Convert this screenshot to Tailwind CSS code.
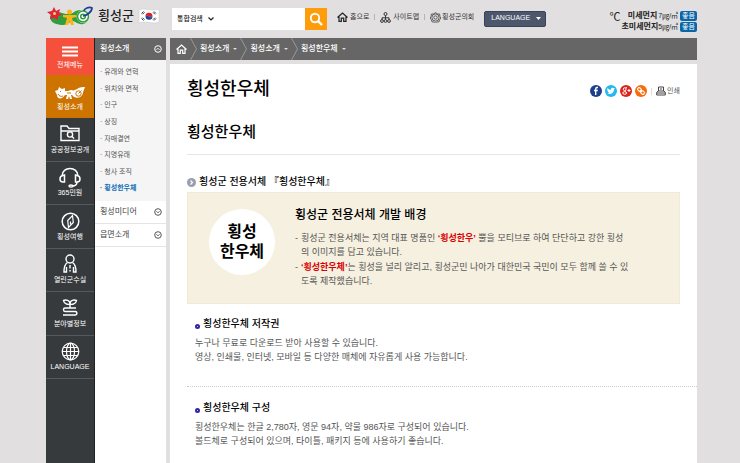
<!DOCTYPE html>
<html lang="ko">
<head>
    <meta charset="UTF-8">
    <meta name="viewport" content="width=device-width, initial-scale=1.0">
    <title>횡성한우체 - 횡성군</title>
    <script src="https://cdn.jsdelivr.net/npm/@tailwindcss/browser@4"></script>
</head>
<body class="min-h-screen flex flex-col bg-[#e1dfe0] pl-[46px] pr-[43px] font-['Liberation_Sans','Noto_Sans_CJK_KR',sans-serif] text-[#222]">
    <!-- top bar -->
    <header class="flex h-[38px] items-center">
        <a href="#" class="flex w-[126px] shrink-0 items-center pb-[6px]">
            <svg class="w-12 h-5 shrink-0" viewBox="0 0 48 20">
                <path d="M4 10c3-4 8-5 12-3 3 1 9 2 12-1 4-3 10-2 13 1 3 4 1 10-4 11-4 1-7-2-10-3-3 0-5 4-10 4S3 17 4 10z" fill="#2f9e3c"/>
                <path d="M8 1l2 4 4-2-1 4 3 2-4 1 0 4-4-2-4 1 1-4-4-3 5-1z" fill="#e0243b"/>
                <circle cx="8.500" cy="7.500" r="1.500" fill="#ffd54a"/>
                <circle cx="23.500" cy="6" r="2.500" fill="#f7b516"/>
                <path d="M17 9h13v2l-4 1 2 7h-3l-1.500-4-1.500 4h-3l2-7-4-1z" fill="#f7b516"/>
                <circle cx="37" cy="10.500" r="6.500" fill="#fff"/>
                <circle cx="37" cy="10.500" r="5.500" fill="none" stroke="#2f9e3c" stroke-width="1.500"/>
                <circle cx="37" cy="10.500" r="2.300" fill="none" stroke="#2f9e3c" stroke-width="1.500"/>
                <path d="M37 10c3 0 9-4 9-8-3-2-8 1-8 3" fill="none" stroke="#1c3f94" stroke-width="1.700"/>
            </svg>
            <span class="ml-1 text-[13px] leading-5 font-medium">횡성군</span>
            <svg class="ml-1 w-[22px] h-[17px]" viewBox="0 0 22 17">
                <path d="M1 2c6-3 12 2 20-1v13c-7 3-13-2-20 1z" fill="#fff" stroke="#ccc" stroke-width=".6"/>
                <path d="M7.500 8.500a3.500 3.500 0 0 1 7-.5c-1.500 2-3 1-3.500.500s-2-1.500-3.500 0z" fill="#d8232f"/>
                <path d="M7.500 8.500a3.500 3.500 0 0 0 7-.5c-1.500 2-3 1-3.500.500s-2-1.500-3.500 0z" fill="#17479e"/>
                <path d="M3.500 5.500l2-2M4.500 6.300l2-2M16 3.500l2 2M15 4.300l2 2M3.500 10.500l2 2M4.500 9.700l2 2M16 12.500l2-2M15 11.700l2-2" stroke="#222" stroke-width=".9"/>
            </svg>
        </a>
        <form class="flex h-[22px] w-[155px] shrink-0 bg-white">
            <div class="relative flex items-center">
                <select aria-label="검색 구분" class="w-[42px] appearance-none bg-transparent pl-[5px] text-[7px] font-medium">
                    <option>통합검색</option>
                </select>
                <svg class="pointer-events-none absolute right-0 w-[6px] h-[4px]" viewBox="0 0 6 4"><path d="M.5.500L3 3 5.500.500" fill="none" stroke="#222" stroke-width="1.200"/></svg>
            </div>
            <input type="text" aria-label="검색어" class="min-w-0 flex-1 px-1 text-[8px] outline-none">
            <button type="submit" aria-label="검색" class="flex w-[22px] items-center justify-center bg-[#ff9c0a]">
                <svg class="w-[14px] h-[14px]" viewBox="0 0 14 14" fill="none" stroke="#fff"><circle cx="6" cy="6" r="4.200" stroke-width="1.900"/><path d="M9 9l4 4" stroke-width="2.400"/></svg>
            </button>
        </form>
        <nav class="ml-[10px] flex shrink-0 items-center pb-1 text-[7px] text-[#333]">
            <a href="#" class="flex items-center gap-0.5">
                <svg class="w-[11px] h-[10px]" viewBox="0 0 11 10" fill="none" stroke="#222" stroke-width="1.200"><path d="M.5 5.500l5-4.500 5 4.500M2 4.800v4.600h2.300V6.200h2.400v3.200H9V4.800"/></svg>
                홈으로
            </a>
            <span class="mx-[5px] h-[6px] w-px bg-[#b5b5b5]"></span>
            <a href="#" class="flex items-center gap-0.5">
                <svg class="w-[11px] h-[11px]" viewBox="0 0 11 11" fill="none" stroke="#333"><circle cx="5.500" cy="2" r="1.500"/><circle cx="2" cy="9" r="1.400"/><circle cx="5.500" cy="9" r="1.400"/><circle cx="9" cy="9" r="1.400"/><path d="M5.500 3.500v4M2 7.500V5.800h7v1.700"/></svg>
                사이트맵
            </a>
            <span class="mx-[5px] h-[6px] w-px bg-[#b5b5b5]"></span>
            <a href="#" class="flex items-center gap-px">
                <svg class="w-[11px] h-[11px]" viewBox="0 0 11 11" fill="none" stroke="#444" stroke-width=".8"><circle cx="5.500" cy="5.500" r="3.600"/><circle cx="5.500" cy="5.500" r="1.700"/><path d="M5.500.4l1.700 1.500 2.400.1.300 2.400.9 1.600-1.200 1.800-.6 2-2.200.2-1.300.9-1.400-.9-2.100-.2-.6-2L.2 6l.9-1.600.3-2.400 2.400-.1z"/></svg>
                횡성군의회
            </a>
        </nav>
        <button type="button" class="mb-px ml-[10px] flex h-4 w-[62px] shrink-0 items-center justify-between rounded-[2px] border border-[#39425a] bg-[#4d576c] pr-1 pl-[6px] text-[7px] text-white">
            LANGUAGE
            <svg class="w-[5px] h-[3px]" viewBox="0 0 5 3"><path d="M0 0h5L2.500 3z" fill="#fff"/></svg>
        </button>
        <div class="ml-auto flex shrink-0 items-start gap-px pt-[5px]">
            <span class="text-[11px] leading-3">℃</span>
            <ul class="flex flex-col items-end gap-px text-[8px] leading-[10px]">
                <li class="flex items-center"><b>미세먼지</b><span class="ml-px text-[7px]">7㎍/㎥</span><span class="ml-0.5 rounded-[2px] bg-[#0b66a8] px-[2px] text-[7px] text-white">좋음</span></li>
                <li class="flex items-center"><b>초미세먼지</b><span class="text-[7px]">5㎍/㎥</span><span class="ml-0.5 rounded-[2px] bg-[#0b66a8] px-[2px] text-[7px] text-white">좋음</span></li>
            </ul>
        </div>
    </header>

    <div class="flex flex-1">
        <!-- main menu -->
        <nav class="flex w-[49px] shrink-0 flex-col border-r border-[#222] bg-[#363a3d] text-[7px] leading-[10px] text-white">
            <a href="#" class="flex h-[37px] flex-col items-center justify-end gap-[3px] bg-[#f4503c] pb-[5px]">
                <svg class="w-4 h-[11px]" viewBox="0 0 16 11" stroke="#fff" stroke-width="1.800"><path d="M0 1.500h16M0 5.500h16M0 9.500h16"/></svg>
                전체메뉴
            </a>
            <a href="#" class="flex h-[43px] flex-col items-center justify-end gap-[2px] bg-[#cd7300] pb-[6px]">
                <svg class="w-8 h-[14px]" viewBox="0 0 32 14">
                    <path d="M1 5l3-1 1-3 3 2 3-1v3c2 0 4 0 6-1 3 1 4 0 6-1 3-2 6-2 8-2-1 3-2 4-2 6-1 4-5 6-9 4l-2-2-1 0 1 4h-2l-1-3-1 3h-2l1-4-2 0C8 14 3 13 3 9z" fill="#fff"/>
                    <path d="M4 8c1 2 3 3 5 2M6 5l1 1M13 7h4" stroke="#cd7300" fill="none"/>
                    <circle cx="24.500" cy="7.500" r="2.700" fill="none" stroke="#cd7300"/><path d="M24.500 7.500l3-3" stroke="#cd7300"/>
                </svg>
                횡성소개
            </a>
            <ul class="flex h-[261px] flex-col">
                <li class="flex-1 border-b border-[#55595c]"><a href="#" class="flex h-full flex-col items-center justify-end gap-[3px] pb-[6px]">
                    <svg class="w-5 h-[17px]" viewBox="0 0 20 17" fill="none" stroke="#fff" stroke-width="1.400"><path d="M1 15V1h6l2 2.500h10V15.500H1zM1 6h18"/><circle cx="10" cy="9.500" r="2.600"/><path d="M12 11.500l2 2"/></svg>
                    공공정보공개</a></li>
                <li class="flex-1 border-b border-[#55595c]"><a href="#" class="flex h-full flex-col items-center justify-end pb-[6px]">
                    <svg class="w-[22px] h-[21px]" viewBox="0 0 22 21" fill="none" stroke="#fff" stroke-width="1.500"><path d="M3 9c0-10 16-10 16 0M5.500 8v7H4C0 15 0 9 4 8.500zM16.500 8v7H18c4 0 4-6 0-6.500zM18 15c0 3-2 4-5 4"/><ellipse cx="12" cy="19" rx="2" ry="1"/></svg>
                    365민원</a></li>
                <li class="flex-1 border-b border-[#55595c]"><a href="#" class="flex h-full flex-col items-center justify-end gap-px pb-[6px]">
                    <svg class="w-[19px] h-[19px]" viewBox="0 0 19 19" fill="none" stroke="#fff"><circle cx="9.500" cy="9.500" r="8.300" stroke-width="1.500"/><path d="M11.500 3.500l.8 7-4.800 5-.8-7z" stroke-width="1.200"/><path d="M9.500 9.500v3" stroke-width="1.200"/></svg>
                    횡성여행</a></li>
                <li class="flex-1 border-b border-[#55595c]"><a href="#" class="flex h-full flex-col items-center justify-end gap-[2px] pb-[6px]">
                    <svg class="w-[14px] h-[19px]" viewBox="0 0 14 19" fill="none" stroke="#fff" stroke-width="1.400"><circle cx="7" cy="5" r="4"/><path d="M4.500 8.500C2 10 1 12 1 18h2.500v-5M9.500 8.500C12 10 13 12 13 18h-2.500v-5M7 11v3.500M7 16v1.500"/></svg>
                    열린군수실</a></li>
                <li class="flex-1 border-b border-[#55595c]"><a href="#" class="flex h-full flex-col items-center justify-end gap-[3px] pb-[6px]">
                    <svg class="w-4 h-[17px]" viewBox="0 0 16 17" fill="none" stroke="#fff" stroke-width="1.400"><path d="M8 9V5M8 5C6 6 2 5 1.500 1.500 4 .5 8 1 8 5zM8 5c2 1 6 0 6.500-3.500C12 .5 8 1 8 5zM14 9H3c-2 0-2 3.500 0 3.500h10c2.500 0 2.500 3.500 0 3.500H1M4 12.500h10"/></svg>
                    분야별정보</a></li>
                <li class="flex-1 border-b border-[#55595c]"><a href="#" class="flex h-full flex-col items-center justify-end gap-px pb-[6px]">
                    <svg class="w-[19px] h-[19px]" viewBox="0 0 19 19" fill="none" stroke="#fff" stroke-width="1.200"><circle cx="9.500" cy="9.500" r="8.300"/><ellipse cx="9.500" cy="9.500" rx="4" ry="8.300"/><path d="M9.500 1v17M1 9.500h17M2.500 5.500h14M2.500 13.500h14"/></svg>
                    LANGUAGE</a></li>
            </ul>
        </nav>

        <!-- sub menu -->
        <aside class="w-[71px] shrink-0 bg-white text-[8px]">
            <a href="#" class="flex h-[22px] items-center justify-between bg-[#666] pr-1 pl-[5px] font-medium text-white">
                횡성소개
                <svg class="w-[8px] h-[8px]" viewBox="0 0 8 8" fill="none" stroke="#fff"><circle cx="4" cy="4" r="3.300"/><path d="M2.500 4.800L4 3.300l1.500 1.500"/></svg>
            </a>
            <ul class="flex h-[141px] flex-col bg-[#f5f5f5] py-1 pl-[5px] text-[7px] text-[#555]">
                <li class="flex flex-1 items-center"><a href="#">· 유래와 연혁</a></li>
                <li class="flex flex-1 items-center"><a href="#">· 위치와 면적</a></li>
                <li class="flex flex-1 items-center"><a href="#">· 인구</a></li>
                <li class="flex flex-1 items-center"><a href="#">· 상징</a></li>
                <li class="flex flex-1 items-center"><a href="#">· 자매결연</a></li>
                <li class="flex flex-1 items-center"><a href="#">· 지명유래</a></li>
                <li class="flex flex-1 items-center"><a href="#">· 청사 조직</a></li>
                <li class="flex flex-1 items-center font-bold text-[#0f6cb6]"><a href="#">· 횡성한우체</a></li>
            </ul>
            <a href="#" class="flex h-[23px] items-center justify-between border-b border-[#e5e5e5] pr-1 pl-[5px] text-[#444]">
                횡성미디어
                <svg class="w-[8px] h-[8px]" viewBox="0 0 8 8" fill="none" stroke="#555"><circle cx="4" cy="4" r="3.300"/><path d="M2.500 3.300L4 4.800l1.500-1.500"/></svg>
            </a>
            <a href="#" class="flex h-[23px] items-center justify-between border-b border-[#e5e5e5] pr-1 pl-[5px] text-[#444]">
                읍면소개
                <svg class="w-[8px] h-[8px]" viewBox="0 0 8 8" fill="none" stroke="#555"><circle cx="4" cy="4" r="3.300"/><path d="M2.500 3.300L4 4.800l1.500-1.500"/></svg>
            </a>
        </aside>

        <div class="ml-1 flex min-w-0 flex-1 flex-col">
            <!-- breadcrumb -->
            <nav class="flex h-[22px] items-center bg-[#666] pl-[6px] text-[8px] font-medium text-white">
                <a href="#" aria-label="홈"><svg class="w-[11px] h-[10px]" viewBox="0 0 11 10" fill="none" stroke="#fff" stroke-width="1.200"><path d="M.5 5.500l5-4.500 5 4.500M2 4.800v4.600h2.300V6.200h2.400v3.200H9V4.800"/></svg></a>
                <svg class="mx-[3px] w-[7px] h-[22px]" viewBox="0 0 7 22" fill="none" stroke="#999"><path d="M.5 0l6 11-6 11"/></svg>
                <a href="#" class="flex items-center gap-1">횡성소개 <svg class="w-[4px] h-[2px]" viewBox="0 0 4 2"><path d="M0 0h4L2 2z" fill="#ddd"/></svg></a>
                <svg class="mx-[3px] w-[7px] h-[22px]" viewBox="0 0 7 22" fill="none" stroke="#999"><path d="M.5 0l6 11-6 11"/></svg>
                <a href="#" class="flex items-center gap-1">횡성소개 <svg class="w-[4px] h-[2px]" viewBox="0 0 4 2"><path d="M0 0h4L2 2z" fill="#ddd"/></svg></a>
                <svg class="mx-[3px] w-[7px] h-[22px]" viewBox="0 0 7 22" fill="none" stroke="#999"><path d="M.5 0l6 11-6 11"/></svg>
                <a href="#" class="flex items-center gap-1">횡성한우체 <svg class="w-[4px] h-[2px]" viewBox="0 0 4 2"><path d="M0 0h4L2 2z" fill="#ddd"/></svg></a>
            </nav>

            <main class="mt-1 flex-1 bg-white pl-[17px] text-[9px] leading-[14px] text-[#555]">
                <div class="mr-[17px] border-b border-[#e5e5e5]">
                    <div class="flex items-center justify-between pt-3">
                        <h1 class="text-[18px] leading-[26px] font-medium text-black">횡성한우체</h1>
                        <div class="flex items-center gap-[3px] pt-1">
                            <a href="#" aria-label="페이스북"><svg class="w-3 h-3" viewBox="0 0 12 12"><circle cx="6" cy="6" r="6" fill="#1d3f8c"/><path d="M8 2.500H7c-1 0-1.300.6-1.300 1.500v6M4 5.500h3.800" fill="none" stroke="#fff" stroke-width="1.400"/></svg></a>
                            <a href="#" aria-label="트위터"><svg class="w-3 h-3" viewBox="0 0 12 12"><circle cx="6" cy="6" r="6" fill="#22b8f0"/><path d="M2.500 3c1 1.200 2 1.700 3.400 1.800C5.800 2.500 8 2.300 8.700 3.300l1.200-.3-.8 1.200C9 8 5.500 10 2.300 8.400c1 0 1.600-.2 2.100-.6-1 0-1.400-.6-1.500-1.200C2.300 5.500 2 4.500 2.500 3z" fill="#fff"/></svg></a>
                            <a href="#" aria-label="구글플러스"><svg class="w-3 h-3" viewBox="0 0 12 12" fill="none" stroke="#fff"><circle cx="6" cy="6" r="6" fill="#d9261c" stroke="none"/><circle cx="4.700" cy="4.200" r="1.400"/><ellipse cx="4.700" cy="8" rx="1.900" ry="1.300"/><path d="M5.500 2.700H7M5.500 5.500v1M7.500 5.500h3M9 4v3"/></svg></a>
                            <a href="#" aria-label="주소복사"><svg class="w-3 h-3" viewBox="0 0 12 12" fill="none" stroke="#fff" stroke-width="1.100"><circle cx="6" cy="6" r="6" fill="#f86a0a" stroke="none"/><rect x="2.500" y="3" width="4" height="3" rx="1.500" transform="rotate(40 4.500 4.500)"/><rect x="5.500" y="6" width="4" height="3" rx="1.500" transform="rotate(40 7.500 7.500)"/><path d="M5 5l2 2"/></svg></a>
                            <span class="mx-px h-[7px] w-px bg-[#ddd]"></span>
                            <button type="button" class="flex items-center gap-px text-[7px] leading-3">
                                <svg class="w-[10px] h-[10px]" viewBox="0 0 10 10" fill="none" stroke="#444"><path d="M2.500 5V1h5v4M.7 9V6.500L2 5h6l1.300 1.500V9zM.7 7h8.600M4 3h2"/></svg>
                                인쇄
                            </button>
                        </div>
                    </div>
                    <h2 class="pt-[19px] pb-[11px] text-[15px] leading-[22px] font-medium text-black">횡성한우체</h2>
                </div>

                <h3 class="mt-[19px] flex items-center gap-[3px] text-[10px] leading-4 font-medium text-black">
                    <svg class="w-[9px] h-[9px]" viewBox="0 0 9 9"><circle cx="4.500" cy="4.500" r="4.500" fill="#9a9eae"/><path d="M3.500 2.500l2 2-2 2" fill="none" stroke="#fff" stroke-width="1.200"/></svg>
                    횡성군 전용서체 『횡성한우체』
                </h3>
                <section class="mt-[2px] mr-[17px] flex items-start border border-[#f2ead6] bg-[#f6f0e0] px-[21px] pt-3 pb-[15px]">
                    <div class="mt-1 flex size-[66px] shrink-0 items-center justify-center rounded-full bg-white text-center text-[16px] leading-5 font-bold text-black">횡성<br>한우체</div>
                    <div class="ml-5 min-w-0">
                        <h4 class="text-[12px] leading-5 font-medium text-black">횡성군 전용서체 개발 배경</h4>
                        <ul class="mt-[6px] flex flex-col gap-px">
                            <li class="flex gap-[3px]"><span>-</span><p>횡성군 전용서체는 지역 대표 명품인 <b class="text-[#d90000]">‘횡성한우’</b> 뿔을 모티브로 하여 단단하고 강한 횡성<br>의 이미지를 담고 있습니다.</p></li>
                            <li class="flex gap-[3px]"><span>-</span><p><b class="text-[#d90000]">‘횡성한우체’</b>는 횡성을 널리 알리고, 횡성군민 나아가 대한민국 국민이 모두 함께 쓸 수 있<br>도록 제작했습니다.</p></li>
                        </ul>
                    </div>
                </section>

                <section class="border-b border-dotted border-[#ccc] pt-[12px] pb-[22px] pl-2">
                    <h4 class="flex items-center gap-[3px] text-[10px] leading-4 font-medium text-black"><span class="mt-1 size-[5px] rounded-full border-2 border-[#3122a8]"></span>횡성한우체 저작권</h4>
                    <p class="mt-1">누구나 무료로 다운로드 받아 사용할 수 있습니다.<br>영상, 인쇄물, 인터넷, 모바일 등 다양한 매체에 자유롭게 사용 가능합니다.</p>
                </section>
                <section class="pt-[13px] pl-2">
                    <h4 class="flex items-center gap-[3px] text-[10px] leading-4 font-medium text-black"><span class="mt-1 size-[5px] rounded-full border-2 border-[#3122a8]"></span>횡성한우체 구성</h4>
                    <p class="mt-1">횡성한우체는 한글 2,780자, 영문 94자, 약물 986자로 구성되어 있습니다.<br>볼드체로 구성되어 있으며, 타이틀, 패키지 등에 사용하기 좋습니다.</p>
                </section>
            </main>
        </div>
    </div>
</body>
</html>
